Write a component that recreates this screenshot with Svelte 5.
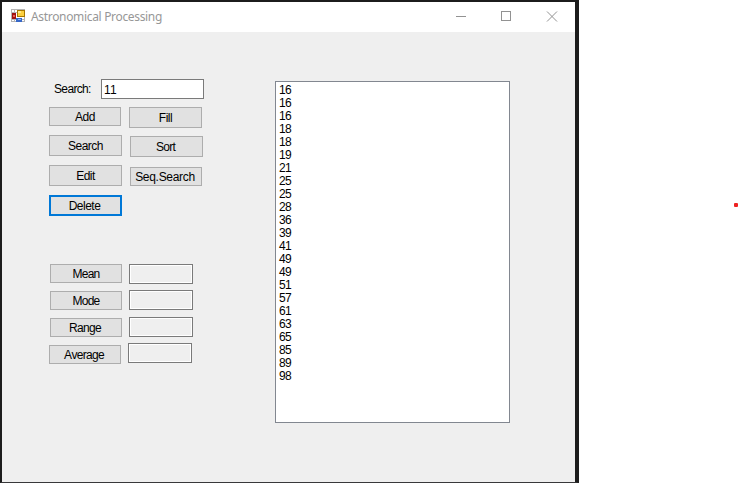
<script>
  const actions = [
    { label: 'Add', w: 72, h: 19, x: 0, gap: 0, dx: 0, ls: -0.5 },
    { label: 'Search', w: 73, h: 21, x: 0, gap: 9, dx: 0, ls: -0.5 },
    { label: 'Edit', w: 73, h: 21, x: 0, gap: 9, dx: 0, ls: -0.5 },
    { label: 'Delete', w: 73, h: 21, x: 0, gap: 9, dx: -1, ls: -0.5 , focused: true }
  ];
  const tools = [
    { label: 'Fill', w: 73, h: 21, x: 0, gap: 0, dx: 0, ls: -0.5 },
    { label: 'Sort', w: 73, h: 21, x: 1, gap: 8, dx: -1, ls: -0.7 },
    { label: 'Seq.Search', w: 72, h: 19, x: 1, gap: 10, dx: -1, ls: -0.7 + 0.4 }
  ];
  const stats = [
    { label: 'Mean', w: 72, h: 19, x: 1, gap: 0, dx: 0, ls: -0.8 },
    { label: 'Mode', w: 72, h: 19, x: 1, gap: 8, dx: 0, ls: -0.8 },
    { label: 'Range', w: 72, h: 19, x: 1, gap: 8, dx: -1, ls: -0.7 },
    { label: 'Average', w: 72, h: 19, x: 0, gap: 8, dx: -1, ls: -0.7 }
  ];
  const results = [
    { x: 1, gap: 0 },
    { x: 1, gap: 6 },
    { x: 1, gap: 7 },
    { x: 0, gap: 6 }
  ];
  const values = [16, 16, 16, 18, 18, 19, 21, 25, 25, 28, 36, 39, 41, 49, 49, 51, 57, 61, 63, 65, 85, 89, 98];
</script>

{#snippet button(b)}
  <button class:focused={b.focused} style="width:{b.w}px;height:{b.h}px;margin-left:{b.x}px;margin-top:{b.gap}px">
    <span style="margin-left:{b.dx * 2}px;letter-spacing:{b.ls}px">{b.label}</span>
  </button>
{/snippet}

<main>
  <div class="window">
    <header>
      <svg class="logo" width="14" height="14" viewBox="0 0 14 14" shape-rendering="crispEdges">
        <path d="M.5.5h13v12H.5zM.5 3.5h6M.5 10.5h13M3.5.5v12" fill="#fff" stroke="#b4b4b4" />
        <rect x="6" y="1" width="8" height="7" fill="#a87800" />
        <rect x="7" y="2" width="6" height="5" fill="#fcd040" />
        <rect x="7" y="2" width="3" height="2" fill="#ffe88a" />
        <rect x="1" y="4" width="4" height="6" fill="#a01010" />
        <rect x="2" y="6" width="2" height="2" fill="#e86050" />
        <rect x="5" y="9" width="6" height="4" fill="#3768c8" />
        <rect x="7" y="10" width="3" height="1" fill="#8bb4f8" />
      </svg>
      <h1>Astronomical Processing</h1>
      <svg class="caption" width="102" height="12" viewBox="0 0 102 12" fill="none" stroke="#929292">
        <path d="M0 5.5h10M45.5 .5h9v9h-9z" shape-rendering="crispEdges" />
        <path d="M91 .5l10 10M101 .5l-10 10" />
      </svg>
    </header>

    <section class="form">
      <div class="controls">
        <label><span>Search:</span><input type="text" value="11" /></label>
        <div class="pair actions">
          <div class="column left">{#each actions as b}{@render button(b)}{/each}</div>
          <div class="column">{#each tools as b}{@render button(b)}{/each}</div>
        </div>
        <div class="pair">
          <div class="column left">{#each stats as b}{@render button(b)}{/each}</div>
          <div class="column">
            {#each results as r}
              <div class="result" style="margin-left:{r.x}px;margin-top:{r.gap}px"></div>
            {/each}
          </div>
        </div>
      </div>
      <ul>{#each values as v}<li>{v}</li>{/each}</ul>
    </section>
  </div>
  <span class="dot"></span>
</main>

<style>
  :global(body) { margin: 0; background: #fff; }
  main {
    display: flex;
    height: 483px;
    font: 12px/13px "Liberation Sans", Arial, sans-serif;
    font-kerning: none;
    color: #000;
  }
  .window {
    box-sizing: border-box;
    width: 579px;
    height: 483px;
    display: flex;
    flex-direction: column;
    background: #efefef;
    border: solid #1c1c1c;
    border-width: 2px 4px 1px 2px;
    border-bottom-color: #38383a;
  }
  header { display: flex; height: 30px; background: #fff; }
  .logo { margin: 7px 0 0 9px; }
  h1 {
    margin: 6px 0 0 6px;
    width: 425px;
    font: 12px/18px "Noto Sans", "Open Sans", sans-serif;
    letter-spacing: -0.33px;
    color: #979797;
    white-space: nowrap;
  }
  .caption { margin-top: 9px; }
  .form { display: flex; align-items: flex-start; }
  .controls { width: 226px; padding: 47px 0 0 47px; }
  label { display: flex; height: 20px; }
  label span { width: 47px; padding: 4px 0 0 5px; letter-spacing: -0.65px; }
  input {
    box-sizing: border-box;
    width: 103px;
    height: 20px;
    padding: 1px 2px 0;
    border: 1px solid #7a7a7a;
    background: #fff;
    font: inherit;
    font-kerning: none;
    letter-spacing: -0.6px;
    color: #000;
    outline: none;
  }
  .pair { display: flex; }
  .actions { margin-top: 8px; height: 157px; }
  .column { display: flex; flex-direction: column; width: 80px; }
  .left { flex: none; width: 79px; }
  .actions .left { width: 80px; }
  button {
    box-sizing: border-box;
    flex: none;
    display: flex;
    align-items: center;
    justify-content: center;
    padding: 1px 0 0;
    border: 1px solid #adadad;
    border-radius: 0;
    background: #e1e1e1;
    font: inherit;
    font-kerning: none;
    color: #000;
    white-space: nowrap;
  }
  button.focused { border: 2px solid #0078d7; }
  .result {
    box-sizing: border-box;
    width: 64px;
    height: 20px;
    border: 1px solid #7a7a7a;
    background: #efefef;
    box-shadow: inset 0 0 0 1px #fff;
  }
  ul {
    box-sizing: border-box;
    width: 235px;
    height: 342px;
    margin: 49px 0 0;
    padding: 2px 0 0 3px;
    border: 1px solid #828790;
    background: #fff;
    list-style: none;
    letter-spacing: -0.6px;
  }
  .dot { width: 4px; height: 4px; margin: 203px 0 0 155px; border-radius: 1px; background: #ee2222; }
</style>
